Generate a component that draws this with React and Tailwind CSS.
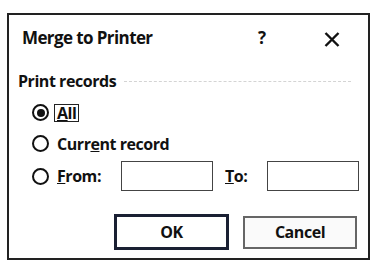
import React from "react";

function Radio({ checked }) {
  return (
    <span className="relative flex h-[17px] w-[17px] shrink-0 items-center justify-center rounded-full border-[2.5px] border-[#111]">
      {checked && <span className="h-[8px] w-[8px] rounded-full bg-[#111]" />}
    </span>
  );
}

export default function App() {
  const lbl = "text-[16px] font-bold leading-none tracking-[-0.45px]";
  return (
    <div className="h-[262px] w-[378px] overflow-hidden bg-white pl-[7px] pt-[13px] text-[#111]" style={{ fontFamily: '"Open Sans", "Noto Sans", sans-serif' }}>
      <div className="h-[247px] w-[363px] border-2 border-[#222] bg-white">
        <div className="flex h-[31px] items-end pl-[13px]">
          <span className="text-[17px] font-bold leading-none tracking-[-0.6px]">Merge to Printer</span>
          <span className="ml-auto text-[17px] font-bold leading-none">?</span>
          <span className="ml-[58px] mr-[28px] mb-[-1px]">
            <svg width="16" height="15" viewBox="0 0 16 15">
              <path d="M1.5 1 L14.5 14 M14.5 1 L1.5 14" stroke="#111" strokeWidth="2.4" fill="none" />
            </svg>
          </span>
        </div>
        <div className="mt-[27px] flex items-center pl-[9px] pr-[17px]">
          <span className={lbl}>Print records</span>
          <span className="ml-[8px] h-0 flex-1 border-t border-dashed border-[#d4d4d4]" />
        </div>
        <div className="mt-[14px] flex flex-col pl-[23px]">
          <div className="flex h-[19px] items-center">
            <Radio checked />
            <span className="ml-[5px] border-[1.5px] border-[#222] px-[2px] text-[16px] font-bold leading-[16px] tracking-[-0.45px]"><u>A</u>ll</span>
          </div>
          <div className="mt-[12px] flex h-[19px] items-center">
            <Radio />
            <span className={"ml-[8px] " + lbl}>Curr<u>e</u>nt record</span>
          </div>
          <div className="mt-[8px] flex h-[30px] items-center">
            <Radio />
            <span className={"ml-[8px] w-[64px] " + lbl}><u>F</u>rom:</span>
            <span className="h-[30px] w-[92px] border border-[#444]" />
            <span className={"ml-[12px] w-[42px] " + lbl}><u>T</u>o:</span>
            <span className="h-[30px] w-[92px] border border-[#444]" />
          </div>
        </div>
        <div className="mt-[23px] flex items-center gap-[14px] pl-[105px]">
          <button className={"flex h-[36px] w-[115px] items-center justify-center border-[3px] border-[#1a2033] bg-white " + lbl}>OK</button>
          <button className={"flex h-[33px] w-[114px] items-center justify-center border-2 border-[#666] bg-[#fafafa] " + lbl}>Cancel</button>
        </div>
      </div>
    </div>
  );
}
